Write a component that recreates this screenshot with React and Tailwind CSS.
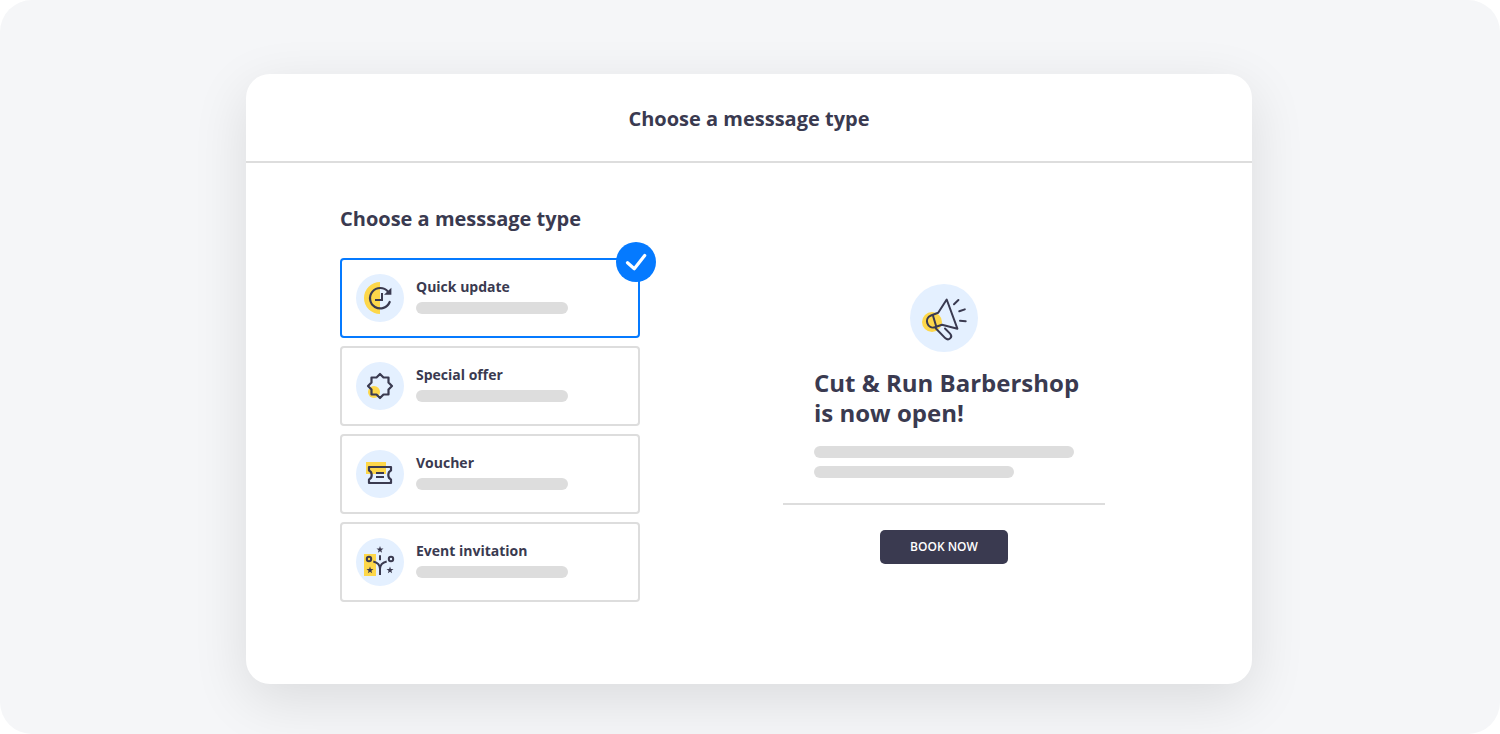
import { useState } from "react";

const INK = "#3a3a50";
const YELLOW = "#fdd74a";

function QuickUpdateIcon() {
  return (
    <svg viewBox="0 0 48 48" className="size-12" fill="none" aria-hidden="true">
      <circle cx="24" cy="24" r="24" fill="#e4f0ff" />
      <path d="M24 8a16 16 0 0 0 0 32z" fill={YELLOW} />
      <path d="M32 17.6A10.2 10.2 0 1 0 33.7 28" stroke={INK} strokeWidth="2.2" strokeLinecap="round" />
      <path d="M35.4 13.8v7h-7.4z" fill={INK} />
      <path d="M26 19v7h-7" stroke={INK} strokeWidth="2" />
    </svg>
  );
}

function SpecialOfferIcon() {
  return (
    <svg viewBox="0 0 48 48" className="size-12" fill="none" aria-hidden="true">
      <circle cx="24" cy="24" r="24" fill="#e4f0ff" />
      <circle cx="18" cy="30" r="6" fill={YELLOW} />
      <path
        d="M24 12l3.5 3.5h5v5L36 24l-3.5 3.5v5h-5L24 36l-3.5-3.5h-5v-5L12 24l3.5-3.5v-5h5z"
        stroke={INK}
        strokeWidth="2.2"
        strokeLinejoin="round"
      />
    </svg>
  );
}

function VoucherIcon() {
  return (
    <svg viewBox="0 0 48 48" className="size-12" fill="none" aria-hidden="true">
      <circle cx="24" cy="24" r="24" fill="#e4f0ff" />
      <path d="M10 12h20v12H10z" fill={YELLOW} />
      <path
        d="M13 17h22v3.5c-1.8.8-2.7 2-2.7 4.500s.9 3.700 2.700 4.500V33H13v-3.500c1.800-.8 2.700-2 2.700-4.500s-.9-3.700-2.700-4.500z"
        stroke={INK}
        strokeWidth="2.2"
        strokeLinejoin="round"
      />
      <path d="M20 23h8M20 27h8" stroke={INK} strokeWidth="2" />
    </svg>
  );
}

function EventIcon() {
  return (
    <svg viewBox="0 0 48 48" className="size-12" fill="none" aria-hidden="true">
      <circle cx="24" cy="24" r="24" fill="#e4f0ff" />
      <path d="M8 16h12v22H8z" fill={YELLOW} />
      <g stroke={INK} strokeWidth="2">
        <circle cx="13" cy="21" r="2.200" />
        <circle cx="35" cy="21" r="2.200" />
        <path d="M24 17.2v5M24 37v-7M17.3 23.4C21 24.200 24 27 24 31M30.700 23.400C27 24.200 24 27 24 31" />
      </g>
      <g fill={INK}>
        <path d="M24 8l.9 2.5 2.6.1-2.1 1.6.7 2.6-2.1-1.5-2.1 1.5.7-2.6-2.1-1.6 2.6-.1z" />
        <path d="M14 28.5l.9 2.5 2.6.1-2.1 1.6.7 2.6-2.1-1.5-2.1 1.5.7-2.6-2.1-1.6 2.6-.1z" />
        <path d="M34 28.5l.9 2.5 2.6.1-2.1 1.6.7 2.6-2.1-1.5-2.1 1.5.7-2.6-2.1-1.6 2.6-.1z" />
      </g>
    </svg>
  );
}

function MegaphoneIcon() {
  return (
    <svg viewBox="0 0 68 68" className="size-[68px]" fill="none" aria-hidden="true">
      <circle cx="34" cy="34" r="34" fill="#e4f0ff" />
      <circle cx="22" cy="38" r="10" fill={YELLOW} />
      <g stroke={INK} strokeWidth="2" strokeLinecap="round" strokeLinejoin="round">
        <path d="M36.7 15.5L47.4 44.7 32 40.7 24.7 43.3C21 44.5 18.3 42 17.3 39.2 16.3 36 17.5 32.8 21 31.5L28.2 28.8z" />
        <path d="M22.8 31l3.5 11.8" />
        <path d="M25.7 44.3l9.5 9.8c3.6 3.2 8-1 4.9-4.5L35 44.5" />
        <path d="M44 20.3l4.4-4.3M49.3 27.3l5.5-1.9M50 36.8l5.7.4" />
      </g>
    </svg>
  );
}

const messageTypes = [
  { id: "update", title: "Quick update", Icon: QuickUpdateIcon },
  { id: "offer", title: "Special offer", Icon: SpecialOfferIcon },
  { id: "voucher", title: "Voucher", Icon: VoucherIcon },
  { id: "event", title: "Event invitation", Icon: EventIcon },
];

function TypeOption({ type, checked, onSelect }) {
  const { id, title, Icon } = type;

  return (
    <label
      className={`relative flex gap-3 rounded border-2 bg-white p-3.5 cursor-pointer ${
        checked ? "border-[#057aff]" : "border-[#dddddd]"
      }`}
    >
      <input
        type="radio"
        name="messageType"
        value={id}
        checked={checked}
        onChange={() => onSelect(id)}
        className="sr-only"
      />
      <Icon />
      <span className="pt-1">
        <span className="block text-sm leading-[18px] font-bold">{title}</span>
        <span className="block mt-1.5 h-3 w-[152px] rounded-full bg-[#dddddd]" />
      </span>

      {/* Selected badge */}
      {checked && (
        <svg viewBox="0 0 40 40" className="absolute -top-[18px] -right-[18px] size-10" fill="none" aria-hidden="true">
          <circle cx="20" cy="20" r="20" fill="#057aff" />
          <path d="M11.5 20.8l6.8 6L28.7 13.5" stroke="#fff" strokeWidth="3.2" strokeLinecap="round" strokeLinejoin="round" />
        </svg>
      )}
    </label>
  );
}

function Preview() {
  return (
    <section className="mt-20 flex w-[322px] flex-col items-center">
      <MegaphoneIcon />
      <div className="mt-4 w-[260px]">
        <h3 className="text-2xl leading-[30px] font-bold whitespace-nowrap">
          Cut &amp; Run Barbershop
          <br />
          is now open!
        </h3>
        <div className="mt-[18px] h-3 rounded-full bg-[#dddddd]" />
        <div className="mt-2 h-3 w-[200px] rounded-full bg-[#dddddd]" />
      </div>
      <hr className="my-[25px] w-full border-t-2 border-[#dddddd]" />
      <button type="button" className="h-[34px] w-32 rounded-[5px] bg-[#3a3a50] text-xs font-semibold text-white">
        BOOK NOW
      </button>
    </section>
  );
}

function App() {
  const [selected, setSelected] = useState("update");

  return (
    <div className="min-h-screen rounded-[32px] bg-[#f5f6f8] pt-[74px] pr-[26px] pb-[50px] pl-6 font-['Open_Sans',sans-serif] text-[#3a3a50]">
      <main className="mx-auto min-h-[610px] max-w-[1006px] rounded-3xl bg-white shadow-[0_16px_56px_rgba(0,0,0,0.11)]">
        <header className="border-b-2 border-[#dddddd] pt-[30px] pb-[27px]">
          <h1 className="text-center text-xl leading-[30px] font-bold">Choose a messsage type</h1>
        </header>

        <div className="flex justify-between pt-[41px] pr-[147px] pl-[94px]">
          <fieldset className="w-[300px]">
            <legend className="text-xl leading-[30px] font-bold">Choose a messsage type</legend>
            <div className="mt-6 flex flex-col gap-2">
              {messageTypes.map((type) => (
                <TypeOption
                  key={type.id}
                  type={type}
                  checked={selected === type.id}
                  onSelect={setSelected}
                />
              ))}
            </div>
          </fieldset>

          <Preview />
        </div>
      </main>
    </div>
  );
}

export default App;
